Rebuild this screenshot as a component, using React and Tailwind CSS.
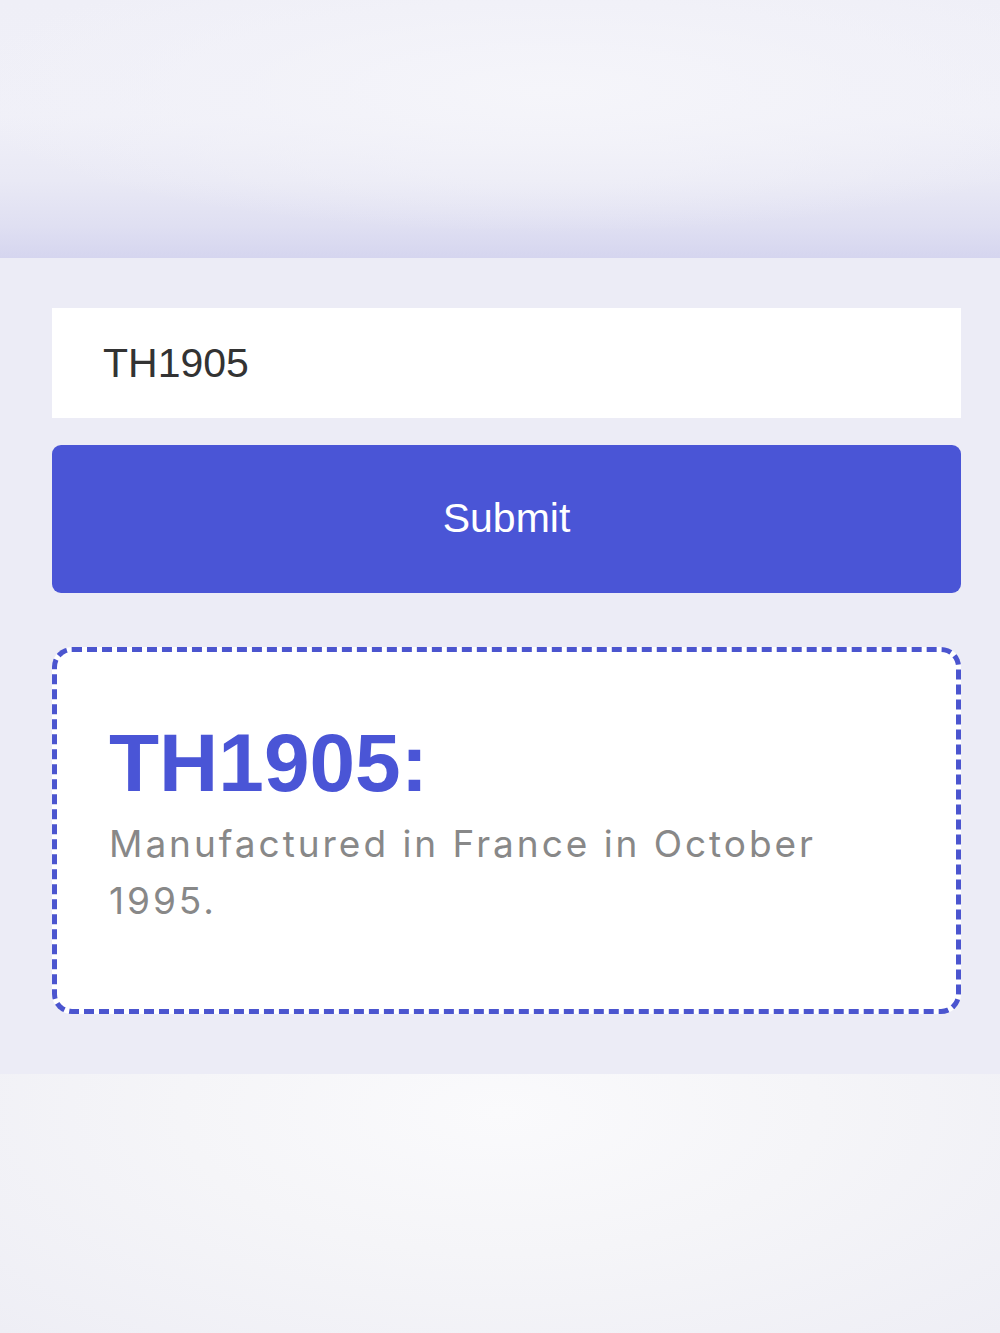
import { useState } from 'react';

export default function App() {
  const [code, setCode] = useState('TH1905');
  const [result, setResult] = useState({
    code: 'TH1905',
    text: 'Manufactured in France in October 1995.',
  });

  const handleSubmit = (e) => {
    e.preventDefault();
    setResult({ ...result, code });
  };

  return (
    <div className="w-[1000px] min-h-[1333px] flex flex-col bg-[#ececf6]">
      <div className="h-[258px] bg-[radial-gradient(ellipse_60%_55%_at_55%_35%,#f5f5fa_0%,rgba(243,243,249,0.6)_55%,rgba(240,240,248,0)_100%),linear-gradient(to_bottom,#efeff7_0%,#f0f0f8_45%,#e9e9f5_70%,#dfdff2_88%,#d5d5ef_100%)]" />

      <form onSubmit={handleSubmit} className="flex flex-col pl-[52px] pr-[39px] pt-[50px] pb-[60px] bg-[#ececf6]">
        <input
          value={code}
          onChange={(e) => setCode(e.target.value)}
          className="h-[110px] bg-white pl-[51px] text-[41px] text-[#333333] outline-none font-['Liberation_Sans',Arial,sans-serif]"
        />
        <button
          type="submit"
          className="mt-[27px] h-[148px] rounded-[9px] bg-[#4a55d6] text-white text-[41px] font-['Liberation_Sans',Arial,sans-serif]"
        >
          Submit
        </button>

        <div className="mt-[54px] rounded-[20px] border-[5px] border-dashed border-[#4b55cf] bg-white pl-[52px] pr-[52px] pt-[70px] pb-[80px]">
          <h2 className="text-[82px] leading-none font-bold text-[#4a55d6] font-['Liberation_Sans',Arial,sans-serif]">
            {result.code}:
          </h2>
          <p className="mt-[11px] text-[37px] leading-[57px] tracking-[0.08em] text-[#888888] font-['Inter','Noto_Sans',sans-serif]">
            {result.text}
          </p>
        </div>
      </form>

      <div className="flex-1 bg-[radial-gradient(ellipse_at_50%_15%,#fafafc_0%,#f5f5f8_45%,#eeeef5_100%)]" />
    </div>
  );
}
